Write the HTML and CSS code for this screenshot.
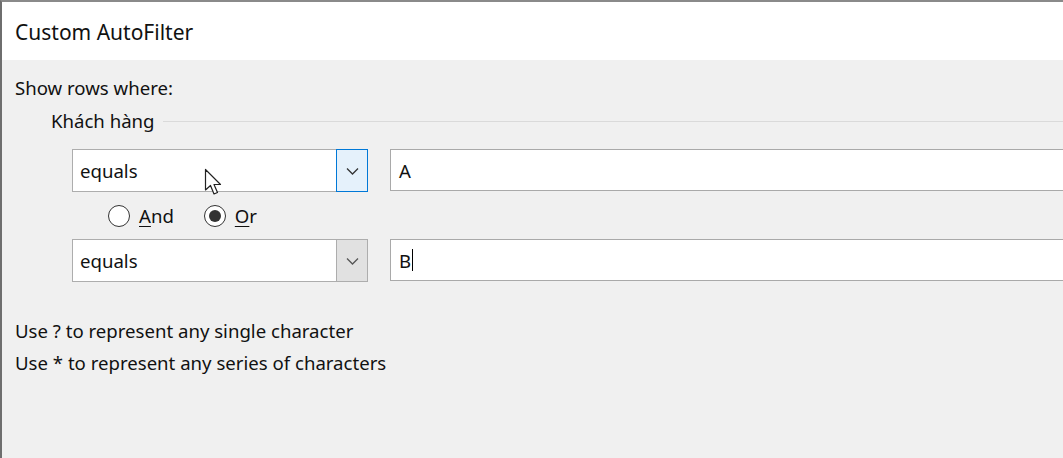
FILE: index.html
```html
<!DOCTYPE html>
<html>
<head>
<meta charset="utf-8">
<title>Custom AutoFilter</title>
<link rel="stylesheet" href="styles.css">
</head>
<body>
<div class="window">
  <div class="titlebar"><span class="title">Custom AutoFilter</span></div>
  <div class="content">
    <div class="prompt">Show rows where:</div>
    <div class="group-head"><span class="group-label">Khách hàng</span><span class="group-line"></span></div>
    <div class="crit-row">
      <div class="combo">
        <span class="combo-text">equals</span>
        <span class="combo-btn active"><svg width="13" height="8" viewBox="0 0 13 8"><path d="M1 1.5 L6.5 7 L12 1.5" fill="none" stroke="#333" stroke-width="1.3"/></svg></span>
      </div>
      <div class="field"><span>A</span></div>
    </div>
    <div class="radio-row">
      <label class="radio"><span class="circle"></span><span class="rlabel"><u>A</u>nd</span></label>
      <label class="radio"><span class="circle checked"></span><span class="rlabel"><u>O</u>r</span></label>
    </div>
    <div class="crit-row">
      <div class="combo">
        <span class="combo-text">equals</span>
        <span class="combo-btn hover"><svg width="13" height="8" viewBox="0 0 13 8"><path d="M1 1.5 L6.5 7 L12 1.5" fill="none" stroke="#555" stroke-width="1.3"/></svg></span>
      </div>
      <div class="field"><span>B</span><span class="caret"></span></div>
    </div>
    <div class="hints">
      <div>Use ? to represent any single character</div>
      <div>Use * to represent any series of characters</div>
    </div>
  </div>
  <svg class="cursor" width="20" height="30" viewBox="0 0 20 30"><path d="M1.5 1.5 L1.5 22 L6.5 17.5 L10 26 L13.5 24.5 L10 16.5 L16.5 16.5 Z" fill="#fff" stroke="#222" stroke-width="1.2" stroke-linejoin="round"/></svg>
</div>
</body>
</html>
```
FILE: styles.css
```css
html, body {
  margin: 0;
  padding: 0;
}
body {
  width: 1063px;
  height: 458px;
  overflow: hidden;
  font-family: "Noto Sans", "Liberation Sans", sans-serif;
  color: #111;
  background: #f0f0f0;
}
.window {
  position: relative;
  height: 458px;
  border-left: 2px solid #6e6e6e;
  border-top: 2px solid #8a8a8a;
  box-sizing: border-box;
  display: flex;
  flex-direction: column;
}
.titlebar {
  height: 58px;
  background: #ffffff;
  display: flex;
  align-items: center;
  padding-left: 13px;
}
.title {
  font-size: 21px;
  color: #111;
  margin-top: 2px;
}
.content {
  flex: 1;
  background: #f0f0f0;
  padding: 16px 0 0 13px;
  font-size: 18.6px;
}
.prompt {
  line-height: 24px;
}
.group-head {
  display: flex;
  align-items: center;
  padding-left: 36px;
  margin-top: 9px;
  height: 24px;
}
.group-label {
  line-height: 24px;
}
.group-line {
  flex: 1;
  height: 1px;
  background: #dadada;
  margin-left: 8px;
}
.crit-row {
  display: flex;
  margin-left: 57px;
  margin-top: 16px;
  gap: 22px;
}
.radio-row + .crit-row {
  margin-top: 0;
}
.combo {
  width: 296px;
  height: 43px;
  box-sizing: border-box;
  border: 1px solid #adadad;
  background: #fff;
  display: flex;
  align-items: stretch;
}
.combo-text {
  flex: 1;
  padding-left: 7px;
  display: flex;
  align-items: center;
}
.combo-btn {
  width: 32px;
  display: flex;
  align-items: center;
  justify-content: center;
  margin: -1px -1px -1px 0;
  box-sizing: border-box;
}
.combo-btn.active {
  background: #e5f1fb;
  border: 1px solid #0078d7;
}
.combo-btn.hover {
  background: #e1e1e1;
  border: 1px solid #adadad;
}
.field {
  flex: 1;
  height: 42px;
  box-sizing: border-box;
  border: 1px solid #a9a9a9;
  border-right: none;
  background: #fff;
  display: flex;
  align-items: center;
  padding-left: 8px;
  margin-right: -2px;
}
.caret {
  width: 1px;
  height: 22px;
  background: #000;
  margin-left: 1px;
}
.radio-row {
  display: flex;
  height: 47px;
  align-items: center;
  padding-left: 93px;
  gap: 30px;
}
.radio {
  display: flex;
  align-items: center;
  gap: 9px;
}
.circle {
  width: 22px;
  height: 22px;
  box-sizing: border-box;
  border: 1px solid #333;
  border-radius: 50%;
  background: #fff;
  display: flex;
  align-items: center;
  justify-content: center;
}
.circle.checked::after {
  content: "";
  width: 12px;
  height: 12px;
  border-radius: 50%;
  background: #333;
}
.rlabel u {
  text-decoration-thickness: 1px;
  text-underline-offset: 3px;
}
.hints {
  margin-top: 33px;
  line-height: 32px;
}
.cursor {
  position: absolute;
  left: 202px;
  top: 166px;
}
```
